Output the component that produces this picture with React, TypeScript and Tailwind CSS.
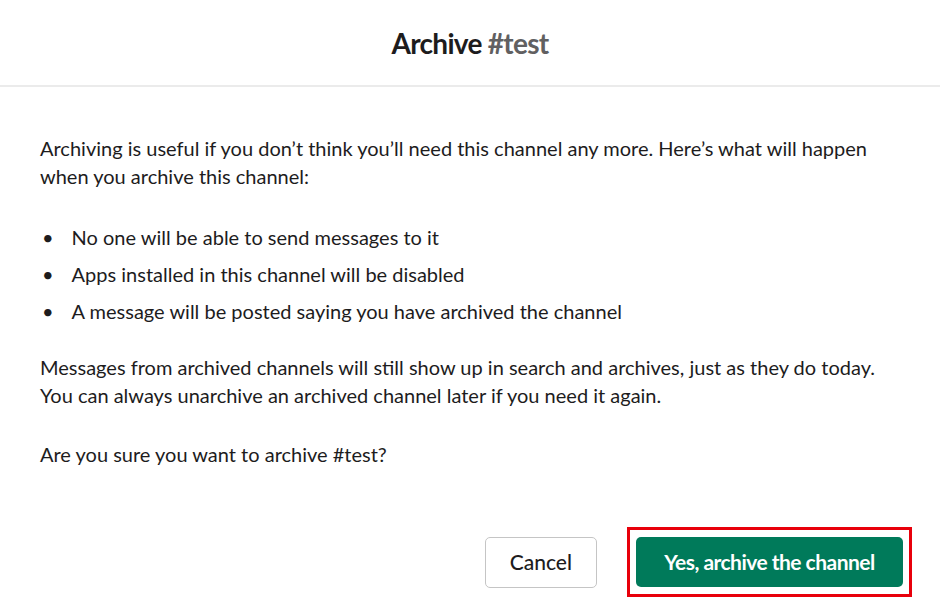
export default function App() {
    return (
        <div className="w-[940px] h-[615px] bg-white text-[#1d1c1d] font-[Lato,sans-serif] flex flex-col">
            <header className="h-[87px] border-b-2 border-[#ebebeb] flex items-center justify-center">
                <h1 className="text-[28px] font-bold tracking-tight mt-[1px]">
                    Archive <span className="text-[#616061]">#test</span>
                </h1>
            </header>

            <div className="px-[40px] pt-[47px] text-[20px] leading-[28px]">
                <p>
                    Archiving is useful if you don’t think you’ll need this channel any more. Here’s what will happen when you archive this channel:
                </p>
                <ul className="mt-[33px] space-y-[9px] pl-[2px]">
                    <li className="flex gap-[18px]"><span>•</span>No one will be able to send messages to it</li>
                    <li className="flex gap-[18px]"><span>•</span>Apps installed in this channel will be disabled</li>
                    <li className="flex gap-[18px]"><span>•</span>A message will be posted saying you have archived the channel</li>
                </ul>
                <p className="mt-[28px]">
                    Messages from archived channels will still show up in search and archives, just as they do today. You can always unarchive an archived channel later if you need it again.
                </p>
                <p className="mt-[31px]">Are you sure you want to archive #test?</p>
            </div>

            <div className="flex justify-end items-center gap-[30px] pr-[28px] mt-auto mb-[18px]">
                <button className="h-[51px] px-[24px] rounded-[5px] border border-[#c5c5c5] text-[21px] font-medium text-[#1d1c1d]">
                    Cancel
                </button>
                <div className="border-[3px] border-[#e8000b] px-[6px] py-[7px]">
                    <button className="h-[50px] w-[267px] rounded-[5px] bg-[#007a5a] text-white text-[21px] font-bold tracking-tight">
                        Yes, archive the channel
                    </button>
                </div>
            </div>
        </div>
    )
}
